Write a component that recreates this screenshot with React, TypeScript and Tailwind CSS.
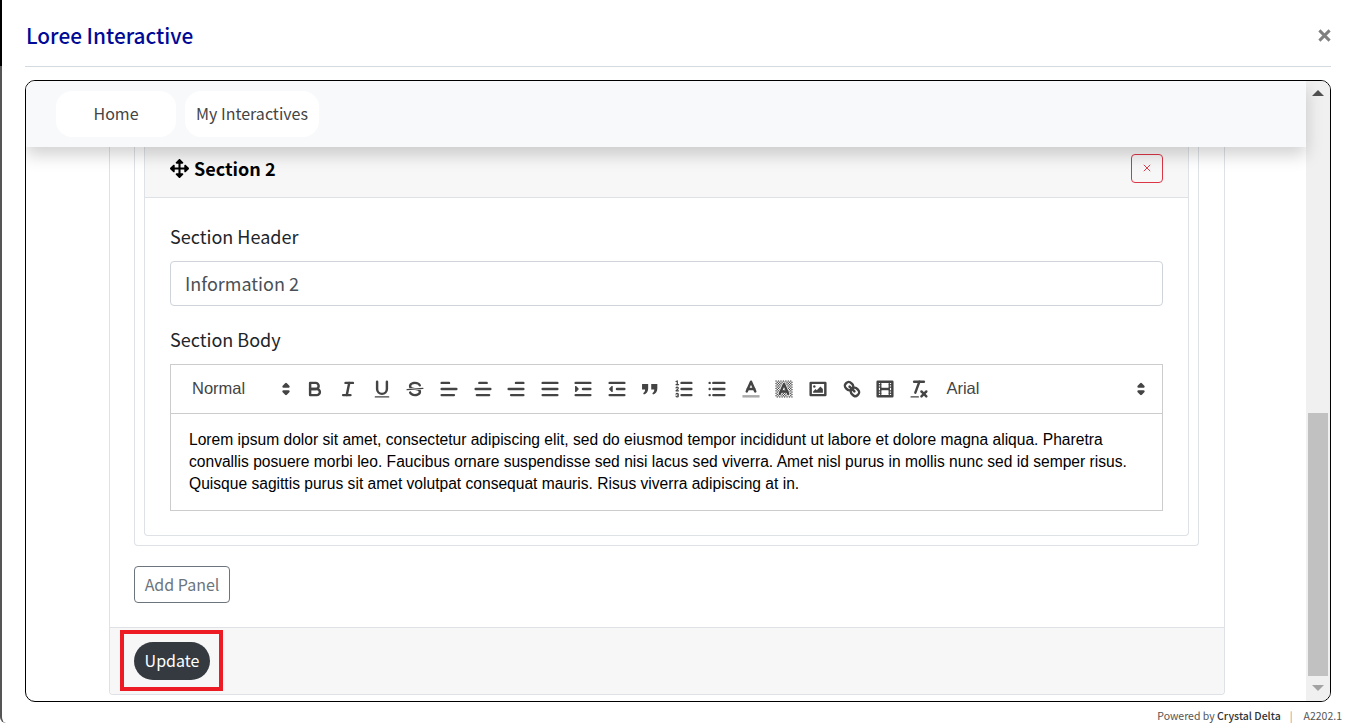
import React from "react";

const S = ({ children, w = 22 }: { children: React.ReactNode; w?: number }) => (
  <svg viewBox="0 0 18 18" width={w} height={w} fill="none" stroke="#444" strokeWidth={2} strokeLinecap="round" strokeLinejoin="round">
    {children}
  </svg>
);
const F = { fill: "#444", stroke: "none" } as const;
const T = { strokeWidth: 1 } as const;

const Arrows = () => (
  <svg viewBox="0 0 18 18" width={22} height={22} fill="#444" stroke="#444" strokeWidth={2} strokeLinejoin="round">
    <polygon points="7 11 9 13 11 11 7 11" />
    <polygon points="7 7 9 5 11 7 7 7" />
  </svg>
);

const hatch: number[][] = [];
for (let x = 2; x < 16; x++) {
  for (let y = 2; y < 16; y++) {
    if ((x + y) % 2 === 0) hatch.push([x, y]);
  }
}

const icons: React.ReactNode[] = [
  <S key="b"><path d="M5,4H9.5A2.5,2.5,0,0,1,12,6.5v0A2.5,2.5,0,0,1,9.5,9H5V4Z" /><path d="M5,9h5.5A2.5,2.5,0,0,1,13,11.5v0A2.5,2.5,0,0,1,10.5,14H5V9Z" /></S>,
  <S key="i"><line x1="7" x2="13" y1="4" y2="4" /><line x1="5" x2="11" y1="14" y2="14" /><line x1="8" x2="10" y1="14" y2="4" /></S>,
  <S key="u"><path d="M5,3V9a4,4,0,0,0,4,4H9a4,4,0,0,0,4-4V3" /><rect {...F} height="1" rx=".5" ry=".5" width="12" x="3" y="15" /></S>,
  <S key="s"><line {...T} x1="15.5" x2="2.5" y1="8.5" y2="9.5" /><path {...F} d="M9.007,8C6.542,7.791,6,7.519,6,6.5,6,5.792,7.283,5,9,5c1.571,0,2.765.679,2.969,1.309a1,1,0,0,0,1.9-.617C13.356,4.106,11.354,3,9,3,6.2,3,4,4.538,4,6.5a3.2,3.2,0,0,0,.5,1.843Z" /><path {...F} d="M8.984,10C11.457,10.208,12,10.479,12,11.5c0,.708-1.283,1.5-3,1.5-1.571,0-2.765-.679-2.969-1.309a1,1,0,1,0-1.9.617C4.644,13.894,6.646,15,9,15c2.8,0,5-1.538,5-3.5a3.2,3.2,0,0,0-.5-1.843Z" /></S>,
  <S key="al"><line x1="3" x2="15" y1="9" y2="9" /><line x1="3" x2="13" y1="14" y2="14" /><line x1="3" x2="9" y1="4" y2="4" /></S>,
  <S key="ac"><line x1="15" x2="3" y1="9" y2="9" /><line x1="14" x2="4" y1="14" y2="14" /><line x1="12" x2="6" y1="4" y2="4" /></S>,
  <S key="ar"><line x1="15" x2="3" y1="9" y2="9" /><line x1="15" x2="5" y1="14" y2="14" /><line x1="15" x2="9" y1="4" y2="4" /></S>,
  <S key="aj"><line x1="15" x2="3" y1="9" y2="9" /><line x1="15" x2="3" y1="14" y2="14" /><line x1="15" x2="3" y1="4" y2="4" /></S>,
  <S key="in"><line x1="3" x2="15" y1="14" y2="14" /><line x1="3" x2="15" y1="4" y2="4" /><line x1="9" x2="15" y1="9" y2="9" /><polygon fill="#444" strokeWidth={1} points="3 7 3 11 5 9 3 7" /></S>,
  <S key="out"><line x1="3" x2="15" y1="14" y2="14" /><line x1="3" x2="15" y1="4" y2="4" /><line x1="9" x2="15" y1="9" y2="9" /><polygon fill="#444" strokeWidth={1} points="5 7 5 11 3 9 5 7" /></S>,
  <S key="q"><path {...F} d="M2.5,5 H7.5 V8.5 C7.5,11 6,13 4,13.5 L3.4,12.4 C4.4,11.8 5,11 5,9.5 H2.5 Z" /><path {...F} d="M10,5 H15 V8.5 C15,11 13.5,13 11.5,13.5 L10.9,12.4 C11.9,11.8 12.5,11 12.5,9.5 H10 Z" /></S>,
  <S key="ol"><line x1="7" x2="15" y1="4" y2="4" /><line x1="7" x2="15" y1="9" y2="9" /><line x1="7" x2="15" y1="14" y2="14" /><line {...T} x1="2.5" x2="4.5" y1="5.5" y2="5.5" /><path {...F} d="M3.5,6A0.5,0.5,0,0,1,3,5.5V3.085l-0.276.138A0.5,0.5,0,0,1,2.053,3c-0.124-.247-0.023-0.324.224-0.447l1-.5A0.5,0.5,0,0,1,4,2.5v3A0.5,0.5,0,0,1,3.5,6Z" /><path {...T} d="M4.5,10.5h-2c0-.234,1.85-1.076,1.85-2.234A0.959,0.959,0,0,0,2.5,8.156" /><path {...T} d="M2.5,14.846a0.959,0.959,0,0,0,1.85-.109A0.7,0.7,0,0,0,3.75,14a0.688,0.688,0,0,0,.6-0.736,0.959,0.959,0,0,0-1.85-.109" /></S>,
  <S key="ul"><line x1="6" x2="15" y1="4" y2="4" /><line x1="6" x2="15" y1="9" y2="9" /><line x1="6" x2="15" y1="14" y2="14" /><line x1="3" x2="3" y1="4" y2="4" /><line x1="3" x2="3" y1="9" y2="9" /><line x1="3" x2="3" y1="14" y2="14" /></S>,
  <S key="c"><line x1="3" x2="15" y1="15" y2="15" stroke="#aaa" strokeLinecap="square" /><polyline points="5.5 11 9 3 12.5 11" /><line x1="11.63" x2="6.38" y1="9" y2="9" /></S>,
  <S key="bg">
    {hatch.map(([x, y]) => <rect key={`${x}-${y}`} fill="#444" stroke="none" x={x} y={y} width={1} height={1} />)}
    <polyline points="5.5 13 9 5 12.5 13" stroke="#fff" strokeWidth={3} />
    <polyline points="5.5 13 9 5 12.5 13" /><line x1="11.63" x2="6.38" y1="11" y2="11" />
  </S>,
  <S key="img"><rect height="10" width="12" x="3" y="4" /><circle {...F} cx="6" cy="7" r="1" /><polyline {...F} points="5 12 5 11 7 9 8 10 11 7 13 9 13 12 5 12" /></S>,
  <S key="ln"><line x1="7" x2="11" y1="7" y2="11" /><path d="M8.9,4.577a3.476,3.476,0,0,1,.36,4.679A3.476,3.476,0,0,1,4.577,8.9C3.185,7.5,2.035,6.4,4.217,4.217S7.5,3.185,8.9,4.577Z" /><path d="M13.423,9.1a3.476,3.476,0,0,0-4.679-.36,3.476,3.476,0,0,0,.36,4.679c1.392,1.392,2.5,2.542,4.679.36S14.815,10.5,13.423,9.1Z" /></S>,
  <S key="v"><rect height="12" width="12" x="3" y="3" /><rect {...F} height="12" width="1" x="5" y="3" /><rect {...F} height="12" width="1" x="12" y="3" /><rect {...F} height="2" width="8" x="5" y="8" /><rect {...F} height="1" width="3" x="3" y="5" /><rect {...F} height="1" width="3" x="3" y="7" /><rect {...F} height="1" width="3" x="3" y="10" /><rect {...F} height="1" width="3" x="3" y="12" /><rect {...F} height="1" width="3" x="12" y="5" /><rect {...F} height="1" width="3" x="12" y="7" /><rect {...F} height="1" width="3" x="12" y="10" /><rect {...F} height="1" width="3" x="12" y="12" /></S>,
  <S key="cl"><line x1="5" x2="13" y1="3" y2="3" /><line x1="6" x2="9.35" y1="12" y2="3" /><line x1="11" x2="15" y1="11" y2="15" /><line x1="15" x2="11" y1="11" y2="15" /><rect {...F} height="1" rx=".5" ry=".5" width="7" x="2" y="15" /></S>,
];

const sans = "font-['Noto_Sans_CJK_JP','Noto_Sans',sans-serif]";
const arial = "font-['Liberation_Sans',Arial,sans-serif]";

export default function App() {
  return (
    <div className={`${sans} relative flex h-[723px] w-full flex-col rounded-bl-md border-l-2 border-[#555] bg-white`}>
      <div className="absolute left-[-2px] top-0 h-[66px] w-[2px] bg-black" />
      <header className="ml-[23px] mr-[16px] flex h-[67px] shrink-0 items-center justify-between border-b border-[#d3dae0] pt-[4px]">
        <h1 className="ml-px text-[20.8px] font-medium leading-none text-[#000a96]">Loree Interactive</h1>
        <svg viewBox="0 0 14 14" width="13" height="13" stroke="#808080" strokeWidth="3.2">
          <path d="M1.5 1.5 12.5 12.5M12.5 1.5 1.5 12.5" />
        </svg>
      </header>

      <div className="ml-[23px] mr-[16px] mt-[13px] flex h-[622px] shrink-0 overflow-hidden rounded-[10px] border border-black">
        <div className="flex min-w-0 flex-1 flex-col">
          <nav className="relative z-10 flex h-[66px] shrink-0 items-center gap-[9px] bg-[#f8f9fa] pl-[30px] shadow-[0_8px_16px_rgba(0,0,0,0.18)]">
            <a className="flex h-[46px] w-[120px] items-center justify-center rounded-[16px] bg-white pb-[3px] text-[16px] text-[#444]">Home</a>
            <a className="flex h-[46px] w-[134px] items-center justify-center rounded-[16px] bg-white pb-[3px] text-[16px] text-[#444]">My Interactives</a>
          </nav>

          <div className="ml-[83px] mr-[81px] mb-[6px] flex min-h-0 flex-1 flex-col rounded-b border-x border-b border-[#dee2e6]">
            <div className="flex-1 pl-6 pr-[25px]">
              <div className="h-[399px] rounded-b border-x border-b border-[#dee2e6] px-[9px]">
                <div className="h-[389px] rounded-b border-x border-b border-[#dee2e6]">
                  <div className="flex h-[51px] items-center justify-between border-b border-[#dee2e6] bg-[#f7f7f7] pb-[8px] pl-[25px] pr-[25px]">
                    <div className="flex items-center gap-[5px]">
                      <svg viewBox="0 0 512 512" width="19" height="19" fill="#000">
                        <path d="M352.2 425.8l-79.2 79.2c-9.4 9.4-24.6 9.4-33.9 0l-79.2-79.2c-15.1-15.1-4.4-41 17-41h51.2L228 284H127.2v51.2c0 21.4-25.9 32.1-41 17L7 272.9c-9.4-9.4-9.4-24.6 0-33.9L86.2 159.8c15.1-15.1 41-4.4 41 17V228H228V127.2h-51.2c-21.4 0-32.1-25.9-17-41l79.2-79.2c9.4-9.4 24.6-9.4 33.9 0l79.2 79.2c15.1 15.1 4.4 41-17 41H284V228h100.8v-51.2c0-21.4 25.9-32.1 41-17l79.2 79.2c9.4 9.4 9.4 24.6 0 33.9l-79.2 79.2c-15.1 15.1-41 4.4-41-17V284H284v100.8h51.2c21.4 0 32.1 25.9 17 41z" />
                      </svg>
                      <span className="text-[18px] font-bold leading-none text-black">Section 2</span>
                    </div>
                    <button className="flex h-[29px] w-[32px] items-center justify-center rounded border border-[#dc3545] bg-transparent">
                      <svg viewBox="0 0 10 10" width="8" height="8" stroke="#dc3545" strokeWidth="1.2">
                        <path d="M1 1 9 9M9 1 1 9" />
                      </svg>
                    </button>
                  </div>
                  <div className="px-[25px] pt-[23px]">
                    <label className="block h-[40px] text-[18px] leading-[30px] text-[#212529]">Section Header</label>
                    <input readOnly value="Information 2" className="block h-[45px] w-full rounded border border-[#ced4da] px-[14px] pb-[2px] text-[18px] text-[#495057]" />
                    <label className="mt-[18px] block h-[40px] text-[18px] leading-[30px] text-[#212529]">Section Body</label>
                    <div className="border border-[#ccc]">
                      <div className={`${arial} flex h-[49px] items-center border-b border-[#ccc] pl-[21px] text-[16.5px] text-[#444]`}>
                        <div className="flex w-[106px] items-center justify-between pr-[1px]">
                          <span className="pb-[2px]">Normal</span>
                          <Arrows />
                        </div>
                        {icons.map((icon, i) => (
                          <span key={i} className="flex w-[33.55px] shrink-0 justify-center">{icon}</span>
                        ))}
                        <div className="flex flex-1 items-center justify-between pl-[11px] pr-[10px]">
                          <span className="pb-[2px]">Arial</span>
                          <Arrows />
                        </div>
                      </div>
                      <div className={`${arial} h-[96px] px-[18px] pt-[15px] text-[15.6px] leading-[22px] text-black`}>
                        Lorem ipsum dolor sit amet, consectetur adipiscing elit, sed do eiusmod tempor incididunt ut labore et dolore magna aliqua. Pharetra convallis posuere morbi leo. Faucibus ornare suspendisse sed nisi lacus sed viverra. Amet nisl purus in mollis nunc sed id semper risus. Quisque sagittis purus sit amet volutpat consequat mauris. Risus viverra adipiscing at in.
                      </div>
                    </div>
                  </div>
                </div>
              </div>
              <button className="mt-5 flex h-[37px] w-[96px] items-center justify-center rounded border border-[#6c757d] pb-[2px] text-[16px] text-[#6c757d]">Add Panel</button>
            </div>

            <div className="relative flex h-[67px] shrink-0 items-center rounded-b border-t border-[#dee2e6] bg-[#f7f7f7] pl-6">
              <button className="flex h-[38px] w-[76px] items-center justify-center rounded-full bg-[#343a40] pb-[2px] text-[16px] text-white">Update</button>
              <div className="absolute left-[10px] top-[2px] h-[61px] w-[103px] border-4 border-[#ed1c24]" />
            </div>
          </div>
        </div>

        <div className="flex w-[24px] shrink-0 flex-col bg-[#f0f0f0]">
          <div className="flex h-[24px] items-start justify-center pt-[9px]">
            <div className="h-0 w-0 border-x-[6px] border-b-[6px] border-x-transparent border-b-[#505050]" />
          </div>
          <div className="mx-[2px] mt-[308px] h-[263px] bg-[#c1c1c1]" />
          <div className="flex flex-1 items-start justify-center pt-[9px]">
            <div className="h-0 w-0 border-x-[6px] border-t-[6px] border-x-transparent border-t-[#a3a3a3]" />
          </div>
        </div>
      </div>

      <footer className="mt-[7px] flex items-center justify-end gap-[9px] pr-[5px] text-[10.5px] leading-[14px] text-[#555]">
        <span>Powered by <span className="font-medium text-[#333]">Crystal Delta</span></span>
        <span className="text-[#999]">|</span>
        <span className="ml-[2px]">A2202.1</span>
      </footer>
    </div>
  );
}
